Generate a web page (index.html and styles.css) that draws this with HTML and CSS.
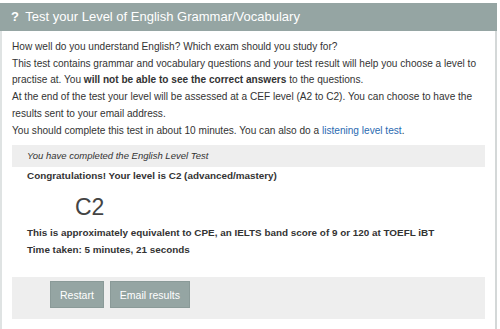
FILE: index.html
```html
<!DOCTYPE html>
<html lang="en">
<head>
    <meta charset="UTF-8">
    <title>Test your Level of English Grammar/Vocabulary</title>
    <link rel="stylesheet" href="styles.css">
</head>
<body>
    <div class="panel">
        <div class="panel-heading">
            <span class="q">?</span> Test your Level of English Grammar/Vocabulary
        </div>
        <div class="panel-body">
            <p class="intro">
                How well do you understand English? Which exam should you study for?<br>
                This test contains grammar and vocabulary questions and your test result will help you choose a level to practise at. You <strong>will not be able to see the correct answers</strong> to the questions.<br>
                At the end of the test your level will be assessed at a CEF level (A2 to C2). You can choose to have the results sent to your email address.<br>
                You should complete this test in about 10 minutes. You can also do a <a href="#">listening level test</a>.
            </p>

            <div class="notice">You have completed the English Level Test</div>

            <div class="result">
                <p class="congrats">Congratulations! Your level is C2 (advanced/mastery)</p>
                <div class="level">C2</div>
                <p class="equiv">This is approximately equivalent to CPE, an IELTS band score of 9 or 120 at TOEFL iBT</p>
                <p class="time">Time taken: 5 minutes, 21 seconds</p>
            </div>

            <div class="actions">
                <button class="btn">Restart</button>
                <button class="btn">Email results</button>
            </div>
        </div>
    </div>
</body>
</html>
```

FILE: styles.css
```css
body {
    margin: 0;
    padding-top: 3px;
    font-family: "Liberation Sans", Arial, sans-serif;
    color: #333;
    background: #fff;
}
.panel {
    width: 497px;
    height: 326px;
    border-left: 2px solid #dfe3e3;
    border-right: 2px solid #d4d8d8;
    box-sizing: border-box;
}
.panel-heading {
    background-color: #95a5a3;
    color: #fff;
    font-size: 13px;
    height: 28px;
    line-height: 28px;
    padding-left: 11px;
    margin-left: -2px;
    margin-right: -2px;
}
.q {
    font-weight: bold;
    margin-right: 3px;
}
.panel-body {
    padding: 8px 10px 0 10px;
}
.intro {
    margin: 0;
    font-size: 10.1px;
    line-height: 16.7px;
}
a {
    color: #2a6ab1;
    text-decoration: none;
}
.notice {
    margin-top: 6px;
    background-color: #eee;
    font-style: italic;
    font-size: 9.5px;
    padding: 5px 15px;
    line-height: 12px;
}
.result {
    padding: 0 15px;
}
.congrats,
.equiv,
.time {
    font-size: 9.9px;
    font-weight: bold;
    line-height: 14px;
}
.congrats {
    margin: 2px 0 0 0;
}
.level {
    font-size: 23px;
    color: #444;
    margin: 11px 0 0 48px;
    line-height: 26px;
}
.equiv {
    margin: 6px 0 0 0;
}
.time {
    margin: 3px 0 0 0;
}
.actions {
    margin-top: 20px;
    background-color: #eee;
    height: 42px;
    padding: 4px 0 0 38px;
    box-sizing: border-box;
    display: flex;
    align-items: flex-start;
    gap: 6px;
}
.btn {
    background-color: #95a5a3;
    color: #fff;
    border: 1px solid #8a9a98;
    font-family: "Liberation Sans", Arial, sans-serif;
    font-size: 10.5px;
    height: 27px;
    padding: 0 9px;
}
```
